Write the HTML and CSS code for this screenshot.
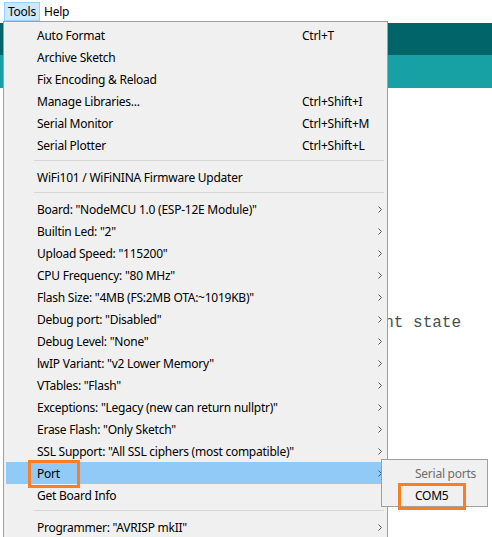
FILE: index.html
```html
<!DOCTYPE html>
<html>
<head>
<meta charset="utf-8">
<link rel="stylesheet" href="styles.css">
</head>
<body>
<div class="menubar">
  <span class="mb-item active">Tools</span>
  <span class="mb-item">Help</span>
</div>
<div class="editor">
  <div class="band-dark"></div>
  <div class="band-light"></div>
  <div class="code">
    <div class="code-line">// save the current state</div>
  </div>
</div>

<div class="menu">
  <div class="row"><span>Auto Format</span><span class="sc">Ctrl+T</span><span></span></div>
  <div class="row"><span>Archive Sketch</span><span class="sc"></span><span></span></div>
  <div class="row"><span>Fix Encoding &amp; Reload</span><span class="sc"></span><span></span></div>
  <div class="row"><span>Manage Libraries...</span><span class="sc">Ctrl+Shift+I</span><span></span></div>
  <div class="row"><span>Serial Monitor</span><span class="sc">Ctrl+Shift+M</span><span></span></div>
  <div class="row"><span>Serial Plotter</span><span class="sc">Ctrl+Shift+L</span><span></span></div>
  <div class="sep"></div>
  <div class="row"><span>WiFi101 / WiFiNINA Firmware Updater</span><span class="sc"></span><span></span></div>
  <div class="sep"></div>
  <div class="row"><span>Board: "NodeMCU 1.0 (ESP-12E Module)"</span><span class="sc"></span><span class="arr"><svg width="4" height="7" viewBox="0 0 4 7"><path d="M0.5 0.5L3.5 3.5L0.5 6.5" fill="none" stroke="#555" stroke-width="1"/></svg></span></div>
  <div class="row"><span>Builtin Led: "2"</span><span class="sc"></span><span class="arr"><svg width="4" height="7" viewBox="0 0 4 7"><path d="M0.5 0.5L3.5 3.5L0.5 6.5" fill="none" stroke="#555" stroke-width="1"/></svg></span></div>
  <div class="row"><span>Upload Speed: "115200"</span><span class="sc"></span><span class="arr"><svg width="4" height="7" viewBox="0 0 4 7"><path d="M0.5 0.5L3.5 3.5L0.5 6.5" fill="none" stroke="#555" stroke-width="1"/></svg></span></div>
  <div class="row"><span>CPU Frequency: "80 MHz"</span><span class="sc"></span><span class="arr"><svg width="4" height="7" viewBox="0 0 4 7"><path d="M0.5 0.5L3.5 3.5L0.5 6.5" fill="none" stroke="#555" stroke-width="1"/></svg></span></div>
  <div class="row"><span>Flash Size: "4MB (FS:2MB OTA:~1019KB)"</span><span class="sc"></span><span class="arr"><svg width="4" height="7" viewBox="0 0 4 7"><path d="M0.5 0.5L3.5 3.5L0.5 6.5" fill="none" stroke="#555" stroke-width="1"/></svg></span></div>
  <div class="row"><span>Debug port: "Disabled"</span><span class="sc"></span><span class="arr"><svg width="4" height="7" viewBox="0 0 4 7"><path d="M0.5 0.5L3.5 3.5L0.5 6.5" fill="none" stroke="#555" stroke-width="1"/></svg></span></div>
  <div class="row"><span>Debug Level: "None"</span><span class="sc"></span><span class="arr"><svg width="4" height="7" viewBox="0 0 4 7"><path d="M0.5 0.5L3.5 3.5L0.5 6.5" fill="none" stroke="#555" stroke-width="1"/></svg></span></div>
  <div class="row"><span>lwIP Variant: "v2 Lower Memory"</span><span class="sc"></span><span class="arr"><svg width="4" height="7" viewBox="0 0 4 7"><path d="M0.5 0.5L3.5 3.5L0.5 6.5" fill="none" stroke="#555" stroke-width="1"/></svg></span></div>
  <div class="row"><span>VTables: "Flash"</span><span class="sc"></span><span class="arr"><svg width="4" height="7" viewBox="0 0 4 7"><path d="M0.5 0.5L3.5 3.5L0.5 6.5" fill="none" stroke="#555" stroke-width="1"/></svg></span></div>
  <div class="row"><span>Exceptions: "Legacy (new can return nullptr)"</span><span class="sc"></span><span class="arr"><svg width="4" height="7" viewBox="0 0 4 7"><path d="M0.5 0.5L3.5 3.5L0.5 6.5" fill="none" stroke="#555" stroke-width="1"/></svg></span></div>
  <div class="row"><span>Erase Flash: "Only Sketch"</span><span class="sc"></span><span class="arr"><svg width="4" height="7" viewBox="0 0 4 7"><path d="M0.5 0.5L3.5 3.5L0.5 6.5" fill="none" stroke="#555" stroke-width="1"/></svg></span></div>
  <div class="row"><span>SSL Support: "All SSL ciphers (most compatible)"</span><span class="sc"></span><span class="arr"><svg width="4" height="7" viewBox="0 0 4 7"><path d="M0.5 0.5L3.5 3.5L0.5 6.5" fill="none" stroke="#555" stroke-width="1"/></svg></span></div>
  <div class="row hl"><span class="mark">Port</span><span class="sc"></span><span class="arr"><svg width="4" height="7" viewBox="0 0 4 7"><path d="M0.5 0.5L3.5 3.5L0.5 6.5" fill="none" stroke="#555" stroke-width="1"/></svg></span></div>
  <div class="row"><span>Get Board Info</span><span class="sc"></span><span></span></div>
  <div class="sep"></div>
  <div class="row"><span>Programmer: "AVRISP mkII"</span><span class="sc"></span><span class="arr"><svg width="4" height="7" viewBox="0 0 4 7"><path d="M0.5 0.5L3.5 3.5L0.5 6.5" fill="none" stroke="#555" stroke-width="1"/></svg></span></div>
</div>

<div class="submenu">
  <div class="srow muted">Serial ports</div>
  <div class="srow"><span class="mark2">COM5</span></div>
</div>
</body>
</html>
```

FILE: styles.css
```css
html, body {
  margin: 0;
  padding: 0;
}
body {
  width: 492px;
  height: 537px;
  overflow: hidden;
  position: relative;
  background: #ffffff;
  font-family: "Noto Sans", "Liberation Sans", sans-serif;
  font-size: 12px;
  letter-spacing: -0.25px;
  color: #000;
}
.menubar {
  height: 22px;
  display: flex;
  align-items: flex-start;
  padding-left: 4px;
  padding-top: 2px;
  box-sizing: border-box;
}
.mb-item {
  height: 19px;
  line-height: 17px;
  padding: 0 4px 0 3px;
  box-sizing: border-box;
  border: 1px solid transparent;
}
.mb-item.active {
  background: #cce8ff;
  border-color: #99d1ff;
  width: 36px;
}
.editor {
  display: flex;
  flex-direction: column;
  padding-top: 1px;
}
.band-dark {
  height: 32px;
  background: #006468;
}
.band-light {
  height: 33px;
  background: #17a1a5;
}
.code {
  padding-top: 226px;
  font-family: "Liberation Mono", monospace;
  font-size: 16px;
  line-height: 19px;
  letter-spacing: 0;
  color: #434f54;
}
.code-line {
  white-space: pre;
  padding-left: 221px;
}
.menu {
  position: absolute;
  left: 3px;
  top: 21px;
  width: 385px;
  height: 530px;
  box-sizing: border-box;
  background: #f0f0f0;
  border: 1px solid #a0a0a0;
  padding: 2px 0 0 0;
}
.row {
  display: grid;
  grid-template-columns: 265px 71px 14px;
  padding-left: 33px;
  height: 22px;
  line-height: 23px;
  margin: 0 2px 0 0;
  white-space: nowrap;
}
.row.hl {
  background: #91c9f7;
  margin-left: 2px;
  padding-left: 31px;
}
.sc {
  white-space: nowrap;
}
.arr {
  display: flex;
  align-items: center;
  justify-content: center;
}
.sep {
  height: 10px;
  box-sizing: border-box;
  padding-top: 4px;
  margin: 0 3px 0 30px;
}
.sep::before {
  content: "";
  display: block;
  border-top: 1px solid #d7d7d7;
}
.mark {
  position: relative;
}
.mark::after {
  content: "";
  position: absolute;
  left: -9px;
  top: -2px;
  width: 52px;
  height: 28px;
  box-sizing: border-box;
  border: 3px solid #fb7d24;
}
.submenu {
  position: absolute;
  left: 381px;
  top: 459px;
  width: 107px;
  height: 48px;
  box-sizing: border-box;
  background: #f0f0f0;
  border: 1px solid #a0a0a0;
  padding-top: 2px;
}
.srow {
  height: 22px;
  line-height: 23px;
  padding-left: 33px;
  white-space: nowrap;
}
.srow.muted {
  color: #6d6d6d;
}
.mark2 {
  position: relative;
}
.mark2::after {
  content: "";
  position: absolute;
  left: -17px;
  top: -4px;
  width: 68px;
  height: 27px;
  box-sizing: border-box;
  border: 3px solid #fb7d24;
}
```
